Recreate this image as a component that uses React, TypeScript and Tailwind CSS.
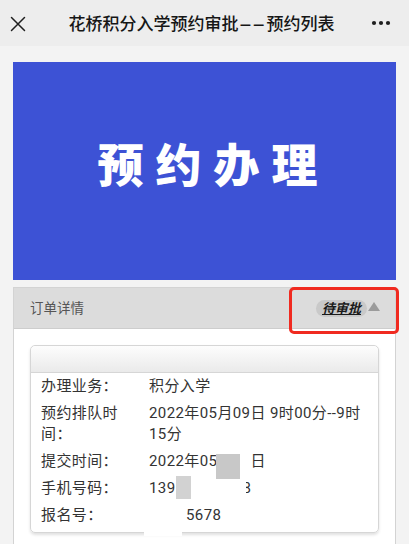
const FONT = "font-['Roboto','Noto_Sans_CJK_SC',sans-serif]";

function CloseIcon() {
  return (
    <svg width="16" height="16" viewBox="0 0 16 16" className="block">
      <path d="M1.5 1.5 L14.5 14.5 M14.5 1.5 L1.5 14.5" stroke="#1f1f1f" strokeWidth="1.5" strokeLinecap="round" />
    </svg>
  );
}

function MoreIcon() {
  return (
    <svg width="20" height="6" viewBox="0 0 20 6" className="block">
      <circle cx="3" cy="3" r="2.1" fill="#1f1f1f" />
      <circle cx="10" cy="3" r="2.1" fill="#1f1f1f" />
      <circle cx="17" cy="3" r="2.1" fill="#1f1f1f" />
    </svg>
  );
}

function Row({ label, children }: { label: string; children: React.ReactNode }) {
  return (
    <div className="flex py-[3px] leading-[21px]">
      <div className="w-[108px] shrink-0 pr-[24px]">{label}</div>
      <div className="relative flex-1">{children}</div>
    </div>
  );
}

export default function App() {
  return (
    <div className={`w-[409px] h-[544px] overflow-hidden bg-[#f3f3f3] ${FONT}`}>
      <div className="grid h-[46px] grid-cols-[36px_1fr_42px] items-center bg-[#ededed]">
        <div className="pl-[10px] pt-[1px]">
          <CloseIcon />
        </div>
        <div className="whitespace-nowrap text-center font-['Noto_Sans_CJK_SC',sans-serif] text-[17px] font-medium text-[#161616]">
          花桥积分入学预约审批<span className="mx-[8px] inline-block scale-x-[2.2]">--</span>预约列表
        </div>
        <div className="flex justify-end pr-[18px]">
          <MoreIcon />
        </div>
      </div>

      <div className="px-[13px] pt-[16px]">
        <div className="flex h-[218px] items-center justify-center bg-[#3d52d5] pb-[10px] pl-[18px]">
          <span className="text-[46px] font-black tracking-[12px] text-white">预约办理</span>
        </div>

        <div className="relative mt-[7px] border border-[#d3d3d3] bg-white">
          <div className="flex h-[41px] items-center justify-between border-b border-[#cdcdcd] bg-[#dcdcdc] pl-[16px] pr-[15px]">
            <span className="text-[13.5px] text-[#555]">订单详情</span>
            <div className="flex items-center gap-[1px]">
              <span className="rounded-full bg-[#c9c9c9] px-[6px] text-[13px] leading-[17px] font-semibold italic text-[#1a1a1a] underline">
                待审批
              </span>
              <svg width="12" height="9" viewBox="0 0 12 9" className="mb-[3px] block">
                <path d="M6 0 L12 9 L0 9 Z" fill="#9b9b9b" />
              </svg>
            </div>
          </div>

          <div className="absolute left-[275px] top-[-1px] h-[47px] w-[110px] rounded-[5px] border-[3px] border-[#f02a20]" />

          <div className="p-[16px] pb-[30px]">
            <div className="relative rounded-[5px] border border-[#d6d6d6] shadow-[0_2px_3px_rgba(0,0,0,0.12)]">
              <div className="h-[27px] rounded-t-[5px] border-b border-[#d6d6d6] bg-gradient-to-b from-[#fdfdfd] to-[#eaeaea]" />
              <div className="pl-[10px] pr-[6px] pb-[3px] text-[15px] tracking-[0.4px] text-[#333]">
                <Row label="办理业务：">积分入学</Row>
                <Row label="预约排队时间：">2022年05月09日 9时00分--9时15分</Row>
                <Row label="提交时间：">
                  2022年05月09日
                  <span className="absolute left-[67px] top-[3px] h-[25px] w-[24px] bg-[#c8c8c8]" />
                  <span className="absolute left-[91px] top-[3px] h-[25px] w-[12px] bg-white" />
                </Row>
                <Row label="手机号码：">
                  139
                  <span className="ml-[67px]">8</span>
                  <span className="absolute left-[27px] top-[-2px] h-[23px] w-[15px] bg-[#d2d2d2]" />
                  <span className="absolute left-[93px] top-0 h-[21px] w-[4px] bg-white" />
                </Row>
                <Row label="报名号：">
                  <span className="ml-[37px]">5678</span>
                </Row>
              </div>
              <div className="absolute bottom-[-4px] left-[113px] h-[8px] w-[38px] bg-white" />
            </div>
          </div>
        </div>
      </div>
    </div>
  );
}
